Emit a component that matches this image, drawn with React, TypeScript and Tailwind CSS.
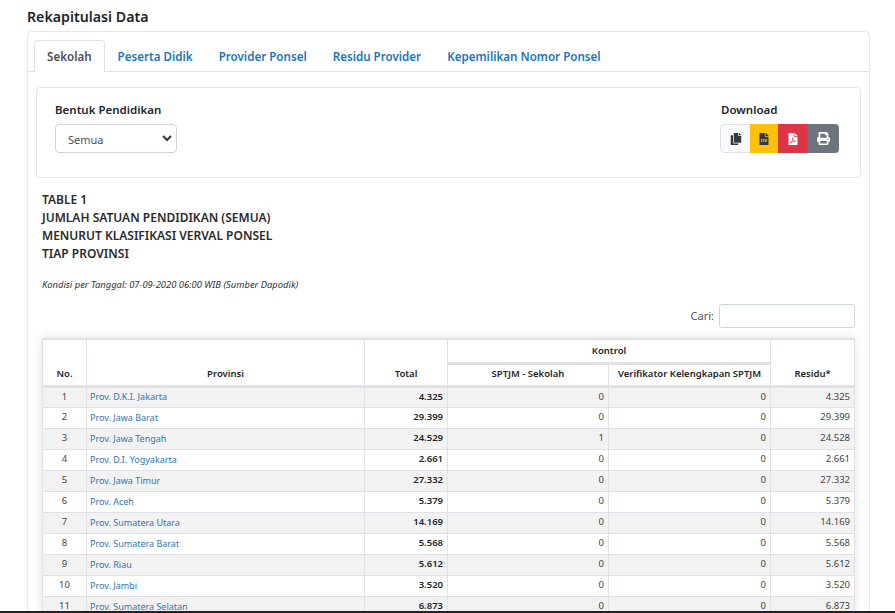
import React from 'react';
import { FaCopy, FaFileCsv, FaFilePdf, FaPrint } from 'react-icons/fa';

const tabs = ['Sekolah', 'Peserta Didik', 'Provider Ponsel', 'Residu Provider', 'Kepemilikan Nomor Ponsel'];

const rows = [
  ['Prov. D.K.I. Jakarta', '4.325', '0', '0', '4.325'],
  ['Prov. Jawa Barat', '29.399', '0', '0', '29.399'],
  ['Prov. Jawa Tengah', '24.529', '1', '0', '24.528'],
  ['Prov. D.I. Yogyakarta', '2.661', '0', '0', '2.661'],
  ['Prov. Jawa Timur', '27.332', '0', '0', '27.332'],
  ['Prov. Aceh', '5.379', '0', '0', '5.379'],
  ['Prov. Sumatera Utara', '14.169', '0', '0', '14.169'],
  ['Prov. Sumatera Barat', '5.568', '0', '0', '5.568'],
  ['Prov. Riau', '5.612', '0', '0', '5.612'],
  ['Prov. Jambi', '3.520', '0', '0', '3.520'],
  ['Prov. Sumatera Selatan', '6.873', '0', '0', '6.873'],
];

const th = 'border border-[#dee2e6] px-1 align-bottom text-center text-[9.5px] font-semibold text-[#212529]';
const td = 'border border-[#dee2e6] px-1 text-[9.5px]';

const App: React.FC = () => {
  return (
    <div className="relative h-[613px] w-[895px] overflow-hidden bg-white font-['Noto_Sans',sans-serif] text-[#212529]">
      <h1 className="pl-[27px] pt-[8px] text-[14.2px] leading-[18px] font-semibold">Rekapitulasi Data</h1>

      <div className="mt-[5px] ml-[27px] h-[600px] w-[843px] rounded-t border border-[#e8e8e8] pt-[8px]">
        {/* Tabs */}
        <div className="flex h-[32px] border-b border-[#dee2e6] pl-[6px]">
          {tabs.map((tab, i) => (
            <div
              key={tab}
              className={
                i === 0
                  ? 'h-[32px] rounded-t border border-b-0 border-[#dee2e6] bg-white px-[12px] text-[11.6px] leading-[31px] font-semibold text-[#495057]'
                  : 'h-[31px] px-[13px] text-[11.6px] leading-[33px] font-semibold text-[#1b75bc]'
              }
            >
              {tab}
            </div>
          ))}
        </div>

        {/* Filter panel */}
        <div className="mx-[8px] mt-[15px] flex h-[91px] w-[825px] justify-between rounded border border-[#e3e3e3] pt-[14px] pr-[21px] pl-[18px]">
          <div>
            <div className="text-[11.5px] leading-[16px] font-semibold">Bentuk Pendidikan</div>
            <div className="mt-[6px] flex h-[29px] w-[122px] items-center justify-between rounded border border-[#ced4da] pt-[3px] pr-[4px] pl-[12px] text-[11px] text-[#495057]">
              Semua
              <svg className="-mt-[3px]" width="10" height="7" viewBox="0 0 10 7" fill="none" stroke="#343a40" strokeWidth="2">
                <path d="M1 1l4 4 4-4" />
              </svg>
            </div>
          </div>
          <div>
            <div className="pl-[1px] text-[11.5px] leading-[16px] font-semibold">Download</div>
            <div className="mt-[6px] flex h-[29px] overflow-hidden rounded">
              <div className="flex w-[30px] items-center justify-center rounded-l border border-r-0 border-[#dee2e6] bg-[#f8f9fa] text-[12px] text-[#343a40]">
                <FaCopy />
              </div>
              <div className="flex w-[28px] items-center justify-center bg-[#ffc107] text-[12px] text-[#343a40]">
                <FaFileCsv />
              </div>
              <div className="flex w-[29px] items-center justify-center bg-[#dc3545] text-[12px] text-white">
                <FaFilePdf />
              </div>
              <div className="flex w-[32px] items-center justify-center bg-[#6c757d] text-[13px] text-white">
                <FaPrint />
              </div>
            </div>
          </div>
        </div>

        {/* Title */}
        <div className="mt-[13px] pl-[14px] text-[12px] leading-[18px] font-semibold text-[#2b2b2b]">
          <div>TABLE 1</div>
          <div>JUMLAH SATUAN PENDIDIKAN (SEMUA)</div>
          <div>MENURUT KLASIFIKASI VERVAL PONSEL</div>
          <div>TIAP PROVINSI</div>
        </div>
        <p className="mt-[16px] pl-[14px] text-[9.4px] leading-[12px] text-[#333] italic">
          Kondisi per Tanggal: 07-09-2020 06:00 WIB (Sumber Dapodik)
        </p>

        {/* Search */}
        <div className="mt-[13px] mr-[14px] flex items-center justify-end gap-[5px]">
          <span className="text-[11px] text-[#555]">Cari:</span>
          <div className="h-[24px] w-[136px] rounded-[3px] border border-[#ced4da]" />
        </div>

        {/* Table */}
        <div className="mt-[10px] ml-[14px] w-[812px] shadow-[0_0_10px_rgba(0,0,0,0.12)]">
          <table className="w-[812px] table-fixed border-collapse border-t-2 border-[#dee2e6]">
            <colgroup>
              <col className="w-[44px]" />
              <col className="w-[278px]" />
              <col className="w-[83px]" />
              <col className="w-[161px]" />
              <col className="w-[162px]" />
              <col className="w-[84px]" />
            </colgroup>
            <thead>
              <tr className="h-[24px]">
                <th rowSpan={2} className={`${th} border-b-[3px] pb-[3px]`}>No.</th>
                <th rowSpan={2} className={`${th} border-b-[3px] pb-[3px]`}>Provinsi</th>
                <th rowSpan={2} className={`${th} border-b-[3px] pb-[3px]`}>Total</th>
                <th colSpan={2} className={`${th} border-b-[3px] align-middle`}>Kontrol</th>
                <th rowSpan={2} className={`${th} border-b-[3px] pb-[3px]`}>Residu*</th>
              </tr>
              <tr className="h-[23px]">
                <th className={`${th} border-b-[3px] align-middle`}>SPTJM - Sekolah</th>
                <th className={`${th} border-b-[3px] align-middle`}>Verifikator Kelengkapan SPTJM</th>
              </tr>
            </thead>
            <tbody>
              {rows.map((row, i) => (
                <tr key={row[0]} className={i % 2 === 0 ? 'h-[21px] bg-[#f2f2f2]' : 'h-[21px] bg-white'}>
                  <td className={`${td} text-center text-[#444]`}>{i + 1}</td>
                  <td className={`${td} pl-[3px] text-left text-[9px] text-[#2f75b5]`}>{row[0]}</td>
                  <td className={`${td} text-right font-semibold text-[#212529]`}>{row[1]}</td>
                  <td className={`${td} text-right text-[#444]`}>{row[2]}</td>
                  <td className={`${td} text-right text-[#444]`}>{row[3]}</td>
                  <td className={`${td} text-right text-[#444]`}>{row[4]}</td>
                </tr>
              ))}
            </tbody>
          </table>
        </div>
      </div>

      {/* dark strip cut off at the bottom of the window */}
      <div className="absolute right-0 bottom-0 left-0 h-[2px] bg-[#222]" />
    </div>
  );
};

export default App;
